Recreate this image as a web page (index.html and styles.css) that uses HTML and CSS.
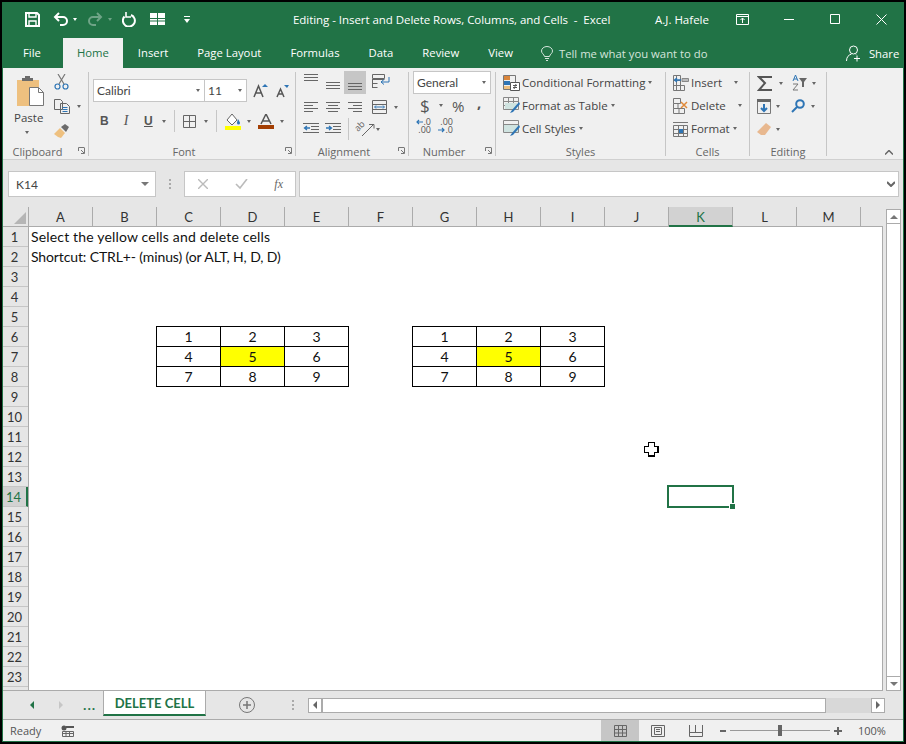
FILE: index.html
```html
<!DOCTYPE html>
<html>
<head>
<meta charset="UTF-8">
<title>Excel</title>
<link rel="stylesheet" href="styles.css">
</head>
<body>
<div class="window">

  <div class="titlebar">
    <div class="qat">
      <svg class="ml22" width="15" height="15" viewBox="0 0 15 15" fill="none" stroke="#fff" stroke-width="2"><path d="M1 1h11l2 2v11H1z"/><path d="M4 1v4h7V1M4 14V9h7v5" stroke-width="1.4"/></svg>
      <svg class="ml13" width="16" height="14" viewBox="0 0 16 14" fill="none" stroke="#fff" stroke-width="2"><path d="M6 1 2 5l4 4M2 5h8a4 4 0 0 1 0 8H7"/></svg>
      <i class="caret white ml4"></i>
      <svg class="ml10 dim" width="16" height="14" viewBox="0 0 16 14" fill="none" stroke="#fff" stroke-width="2"><path d="m10 1 4 4-4 4M14 5H6a4 4 0 0 0 0 8h3"/></svg>
      <i class="caret white ml5 dim"></i>
      <svg class="ml10" width="15" height="15" viewBox="0 0 15 15" fill="none" stroke="#fff" stroke-width="2"><path d="M9 3a6 6 0 1 1-6.500 1.500"/><path d="M4 0v5h5" stroke-width="1.600"/></svg>
      <svg class="ml13" width="15" height="12" viewBox="0 0 15 12" fill="#fff"><path d="M0 0h7v5H0zM8 0h7v5H8zM0 6h7v1.500H0zM8 6h7v1.500H8zM0 8.500h7V12H0zM8 8.500h7V12H8z"/></svg>
      <svg class="ml19" width="6" height="7" viewBox="0 0 6 7" fill="#fff"><path d="M0 0h6v1H0zM0 3h6L3 7z"/></svg>
    </div>
    <div class="doc-title">Editing - Insert and Delete Rows, Columns, and Cells&nbsp; -&nbsp; Excel</div>
    <div class="user">A.J. Hafele</div>
    <svg class="ml26" width="13" height="11" viewBox="0 0 13 11" fill="none" stroke="#fff"><path d="M.5.500h12v10H.500zM.5 2.500h12M6.500 9V4M4.500 6l2-2 2 2"/></svg>
    <svg class="ml35" width="10" height="1" viewBox="0 0 10 1" fill="#fff"><path d="M0 0h10v1H0z"/></svg>
    <svg class="ml36" width="10" height="10" viewBox="0 0 10 10" fill="none" stroke="#fff"><path d="M.5.500h9v9h-9z"/></svg>
    <svg class="ml36" width="11" height="11" viewBox="0 0 11 11" fill="none" stroke="#fff"><path d="m.5.500 10 10M10.500.500l-10 10"/></svg>
  </div>

  <div class="tabs">
    <a class="tab first">File</a>
    <a class="tab active">Home</a>
    <a class="tab">Insert</a>
    <a class="tab">Page Layout</a>
    <a class="tab">Formulas</a>
    <a class="tab">Data</a>
    <a class="tab">Review</a>
    <a class="tab">View</a>
    <svg class="ml13" width="12" height="15" viewBox="0 0 12 15" fill="none" stroke="#d5e5dc"><path d="M3.500 10.500C3 8 .5 7.500.5 5a5.500 4.500 0 0 1 11 0c0 2.500-2.500 3-3 5.500zM4 12.500h4M5 14.500h2"/></svg>
    <span class="tell">Tell me what you want to do</span>
    <svg class="share-icon" width="15" height="17" viewBox="0 0 15 17" fill="none" stroke="#fff"><circle cx="7.500" cy="5" r="4"/><path d="M.5 16c0-4 2-6 5-7M10 9.500 10 9M8 13.500h6M11 10.500v6"/></svg>
    <span class="share">Share</span>
  </div>

  <div class="ribbon">

    <section class="group g-clip">
      <div class="body clip-body">
        <div class="paste">
          <svg width="29" height="31" viewBox="0 0 29 31"><path d="M1 4h5V2h11v2h6v26H1z" fill="#eec07f"/><path d="M6 5V2h3V0h5v2h3v3z" fill="#6b6b6b"/><path d="M13.500 11.500h9l5 5v13h-14z" fill="#fff" stroke="#777"/><path d="M22.500 11.500v5h5" fill="none" stroke="#777"/></svg>
          <span>Paste</span>
          <i class="caret"></i>
        </div>
        <div class="clip-tools">
          <svg width="15" height="16" viewBox="0 0 15 16" fill="none" stroke="#777" stroke-width="1.200"><path d="m4 0 6 10M11 0 5 10"/><circle cx="3.500" cy="12.500" r="2.500" stroke="#2e75b5"/><circle cx="11.500" cy="12.500" r="2.500" stroke="#2e75b5"/></svg>
          <div class="copy-row">
            <svg width="16" height="15" viewBox="0 0 16 15" fill="none" stroke="#666"><path d="M.5.500h6l2 2v8h-8zM6.500 4.500h6l3 3v7h-9z" fill="#f0f0f0"/><path d="M8.500 8.500h5M8.500 10.500h5M8.500 12.500h5" stroke="#2e75b5"/></svg>
            <i class="caret ml7"></i>
          </div>
          <svg width="16" height="15" viewBox="0 0 16 15"><path d="M0 11 6 5l5 5-4 5-3-1z" fill="#eec07f"/><path d="m7 4 4-3 4 3-3 5z" fill="#6b6b6b"/></svg>
        </div>
      </div>
      <div class="label launch">Clipboard<svg class="launcher" width="7" height="7" viewBox="0 0 7 7" fill="none" stroke="#777"><path d="M.5 4V.500H6.500M6.500 1v5.500H3M3 3l3 3"/></svg></div>
    </section>

    <section class="group g-font">
      <div class="body col">
        <div class="row font-row1">
          <div class="combo font-name"><span>Calibri</span><i class="caret"></i></div>
          <div class="combo font-size"><span>11</span><i class="caret"></i></div>
          <svg class="ml6" width="15" height="15" viewBox="0 0 15 15" fill="none"><path d="m1 14 4.500-11L10 14M3 10h5" stroke="#555" stroke-width="1.500"/><path d="m9 4 3-3 3 3z" fill="#2e75b5"/></svg>
          <svg class="ml8" width="13" height="14" viewBox="0 0 13 14" fill="none"><path d="m1 13 3.500-8L8 13M2.500 10h4" stroke="#555" stroke-width="1.500"/><path d="m8 1 3 3 2-3z" fill="#2e75b5"/></svg>
        </div>
        <div class="row font-row2">
          <b class="fmt ml7">B</b>
          <em class="fmt italic">I</em>
          <span class="fmt under">U</span>
          <i class="caret ml10"></i>
          <i class="vsep ml8"></i>
          <svg class="ml8" width="13" height="13" viewBox="0 0 13 13" fill="none" stroke="#666"><path d="M.5.500h12v12H.5zM6.500.500v12M.5 6.500h12"/></svg>
          <i class="caret ml8"></i>
          <i class="vsep ml8"></i>
          <svg class="ml8" width="16" height="17" viewBox="0 0 16 17"><path d="M7 1 2 7l5 5 5-5z" fill="#fff" stroke="#666"/><path d="M13 6c1 2 2 3 2 4a1.500 1.500 0 0 1-3 0c0-1 .5-2 1-4z" fill="#2e75b5"/><path d="M0 13h16v4H0z" fill="#ff0"/></svg>
          <i class="caret ml6"></i>
          <svg class="ml7" width="16" height="15" viewBox="0 0 16 15" fill="none"><path d="m3 10 5-10 5 10M5 7h6" stroke="#555" stroke-width="1.500"/><path d="M0 11h16v4H0z" fill="#a33e03"/></svg>
          <i class="caret ml6"></i>
        </div>
      </div>
      <div class="label launch">Font<svg class="launcher" width="7" height="7" viewBox="0 0 7 7" fill="none" stroke="#777"><path d="M.5 4V.500H6.500M6.500 1v5.500H3M3 3l3 3"/></svg></div>
    </section>

    <section class="group g-align">
      <div class="body col">
        <div class="row align-row1">
          <svg class="ml8" width="14" height="8" viewBox="0 0 14 8" stroke="#666"><path d="M0 .5h14M0 3.500h14M0 6.500h14" /></svg>
          <svg class="ml8 down4" width="14" height="8" viewBox="0 0 14 8" stroke="#666"><path d="M0 .5h14M0 3.500h14M0 6.500h14" /></svg>
          <div class="align-on"><svg width="14" height="8" viewBox="0 0 14 8" stroke="#666"><path d="M0 .5h14M0 3.500h14M0 6.500h14" /></svg></div>
          <svg class="ml6" width="18" height="15" viewBox="0 0 18 15" fill="none" stroke="#666"><path d="M.5.500h12v4H.5zM.5 5.500h12M.5 9.500h5M.5 13.500h5M.5 5v9"/><path d="M17 3v5h-8M12 5.500 9 8l3 2.500" stroke="#2e75b5"/></svg>
        </div>
        <div class="row align-row2">
          <svg class="ml8" width="14" height="11" viewBox="0 0 14 11" stroke="#666"><path d="M0 .5h14M0 3.500h9M0 6.500h14M0 9.500h9"/></svg>
          <svg class="ml8" width="14" height="11" viewBox="0 0 14 11" stroke="#666"><path d="M0 .5h14M2 3.500h10M0 6.500h14M2 9.500h10"/></svg>
          <svg class="ml8" width="14" height="11" viewBox="0 0 14 11" stroke="#666"><path d="M0 .5h14M5 3.500h9M0 6.500h14M5 9.500h9"/></svg>
          <svg class="ml10" width="15" height="14" viewBox="0 0 15 14" fill="none" stroke="#666"><path d="M.5.500h14v13H.5zM.5 4.500h14M.5 9.500h14"/><path d="M3 7h9M4 5.500 2.500 7 4 8.500M11 5.500 12.500 7 11 8.500" stroke="#2e75b5"/></svg>
          <i class="caret ml7"></i>
        </div>
        <div class="row align-row3">
          <svg class="ml7" width="16" height="12" viewBox="0 0 16 12" fill="none"><path d="M0 .5h16M8 3.500h8M8 6.500h8M0 9.500h16" stroke="#666"/><path d="M7 5H2M4 3 1.500 5 4 7" stroke="#2e75b5" stroke-width="1.300"/></svg>
          <svg class="ml6" width="16" height="12" viewBox="0 0 16 12" fill="none"><path d="M0 .5h16M8 3.500h8M8 6.500h8M0 9.500h16" stroke="#666"/><path d="M1 5h5M4 3l2.500 2L4 7" stroke="#2e75b5" stroke-width="1.300"/></svg>
          <i class="vsep ml7"></i>
          <svg class="ml7 orient-icon" width="20" height="16" viewBox="0 0 20 16" fill="none" stroke="#666"><text class="orient" transform="translate(2 11) rotate(-45)">ab</text><path d="M6 15 17 4M13 3.500h5v4"/></svg>
          <i class="caret"></i>
        </div>
      </div>
      <div class="label launch">Alignment<svg class="launcher" width="7" height="7" viewBox="0 0 7 7" fill="none" stroke="#777"><path d="M.5 4V.500H6.500M6.500 1v5.500H3M3 3l3 3"/></svg></div>
    </section>

    <section class="group g-number">
      <div class="body col">
        <div class="combo num-format"><span>General</span><i class="caret"></i></div>
        <div class="row num-row2">
          <span class="num-sym dollar">$</span>
          <i class="caret ml10"></i>
          <span class="num-sym pct">%</span>
          <span class="num-sym comma">,</span>
        </div>
        <div class="row num-row3">
          <div class="dec">.0
.00<svg class="dec-arrow top" width="7" height="6" viewBox="0 0 7 6" fill="none" stroke="#2e75b5" stroke-width="1.200"><path d="M7 3H1M3 1 1 3l2 2"/></svg></div>
          <div class="dec ml7">.00
.0<svg class="dec-arrow bottom" width="7" height="6" viewBox="0 0 7 6" fill="none" stroke="#2e75b5" stroke-width="1.200"><path d="M0 3h6M4 1l2 2-2 2"/></svg></div>
        </div>
      </div>
      <div class="label launch">Number<svg class="launcher" width="7" height="7" viewBox="0 0 7 7" fill="none" stroke="#777"><path d="M.5 4V.500H6.500M6.500 1v5.500H3M3 3l3 3"/></svg></div>
    </section>

    <section class="group g-styles">
      <div class="body col">
        <div class="cmd">
          <svg width="17" height="16" viewBox="0 0 17 16" fill="none"><path d="M.5.500h12v14H.5z" stroke="#777"/><path d="M1 1h6v4H1z" fill="#d9853b"/><path d="M1 6h6v4H1z" fill="#2e75b5"/><path d="M1 11h6v3H1z" fill="#eec07f"/><path d="M7.500 7.500h9v8h-9z" fill="#fff" stroke="#555"/><path d="M10 10.500h4M10 12.500h4M13 9l-2 5" stroke="#555"/></svg>
          <span>Conditional Formatting</span><i class="caret"></i>
        </div>
        <div class="cmd">
          <svg width="17" height="17" viewBox="0 0 17 17" fill="none"><path d="M.5.500h15v12H.5zM.5 4.500h15M5.500.500v12M10.500.500v12M.5 8.500h15" stroke="#888"/><path d="M2 6h12v6H2z" fill="#cfe3e0"/><path d="m16 5-7 8-2 3 3-1 7-8z" fill="#2e75b5"/></svg>
          <span>Format as Table</span><i class="caret"></i>
        </div>
        <div class="cmd">
          <svg width="17" height="17" viewBox="0 0 17 17" fill="none"><path d="M.5.500h15v12H.5zM.5 4.500h15" stroke="#888"/><path d="M1 5h14v7H1z" fill="#cfe3e0"/><path d="m16 5-7 8-2 3 3-1 7-8z" fill="#2e75b5"/></svg>
          <span>Cell Styles</span><i class="caret"></i>
        </div>
      </div>
      <div class="label">Styles</div>
    </section>

    <section class="group g-cells">
      <div class="body col">
        <div class="cmd">
          <svg width="16" height="16" viewBox="0 0 16 16" fill="none"><path d="M.5.500h7v15h-7zM.5 5.500h7M.5 10.500h7M3.500.500v15M7.500 10.500h4v5h-4z" stroke="#777"/><path d="M9 3.500h6.500v3H9z" fill="#bbb" stroke="#888"/><path d="M8 5H1.500M4 3 1.500 5 4 7" stroke="#2e75b5" stroke-width="1.300"/></svg>
          <span>Insert</span><i class="caret ml12"></i>
        </div>
        <div class="cmd">
          <svg width="16" height="16" viewBox="0 0 16 16" fill="none"><path d="M.5.500h7v5h-7zM.5 10.500h11v5H.5zM6 10.500v5M.5 5.500v5M5 5.500v5" stroke="#777"/><path d="m8 4 6 6M14 4l-6 6" stroke="#e08a3a" stroke-width="1.500"/></svg>
          <span>Delete</span><i class="caret ml12"></i>
        </div>
        <div class="cmd">
          <svg width="16" height="16" viewBox="0 0 16 16" fill="none"><path d="M.5 4.500h14v11H.5zM.5 8.500h14M.5 12.500h14M5.500 4.500v11M10.500 4.500v11M0 1.500h15" stroke="#777"/><path d="M6 8h4v4H6z" fill="#2e75b5"/></svg>
          <span>Format</span><i class="caret ml3"></i>
        </div>
      </div>
      <div class="label">Cells</div>
    </section>

    <section class="group g-edit">
      <div class="body col">
        <div class="row edit-row1">
          <svg width="15" height="15" viewBox="0 0 15 15" fill="none" stroke="#555" stroke-width="2"><path d="M15 1H2l6 6-6 7h13"/></svg>
          <i class="caret ml7"></i>
          <svg class="ml9" width="18" height="16" viewBox="0 0 18 16" fill="none"><path d="m1 6 2.500-6L6 6M2 4h3" stroke="#2e75b5"/><path d="M1 9h5L1 15h5" stroke="#777"/><path d="M7 3h8l-3 4v5h-2V7z" fill="#666"/></svg>
          <i class="caret ml2"></i>
        </div>
        <div class="row edit-row2">
          <svg width="14" height="15" viewBox="0 0 14 15" fill="none"><path d="M.5.500h13v14H.5z" stroke="#777"/><path d="M0 0h14v3H0z" fill="#666"/><path d="M7 5v7M4 9l3 3 3-3" stroke="#2e75b5" stroke-width="2"/></svg>
          <i class="caret ml5"></i>
          <svg class="ml11" width="14" height="14" viewBox="0 0 14 14" fill="none" stroke="#2e75b5" stroke-width="2"><circle cx="9" cy="5" r="3.800"/><path d="M6 8 1 13"/></svg>
          <i class="caret ml6"></i>
        </div>
        <div class="row edit-row3">
          <svg width="14" height="13" viewBox="0 0 14 13"><path d="M9 0l5 4-6 8H4L0 9z" fill="#e8b88f"/></svg>
          <i class="caret ml5"></i>
        </div>
      </div>
      <div class="label">Editing</div>
    </section>

    <div class="collapse"><svg width="8" height="5" viewBox="0 0 8 5" fill="none" stroke="#666" stroke-width="1.500"><path d="m0 4.500 4-4 4 4"/></svg></div>
  </div>

  <div class="formula">
    <div class="namebox"><span>K14</span><i class="caret wide"></i></div>
    <span class="grip"></span>
    <div class="fx-box">
      <svg width="10" height="10" viewBox="0 0 10 10" fill="none" stroke="#bbb" stroke-width="1.400"><path d="m0 0 10 10M10 0 0 10"/></svg>
      <svg width="13" height="10" viewBox="0 0 13 10" fill="none" stroke="#bbb" stroke-width="1.600"><path d="m1 5 4 4 7-9"/></svg>
      <span class="fx">fx</span>
    </div>
    <div class="formula-input"><svg width="8" height="6" viewBox="0 0 8 6" fill="none" stroke="#666" stroke-width="2"><path d="m0 1 4 4 4-4"/></svg></div>
  </div>

  <div class="sheet">
    <div class="sheet-main">
      <div class="col-heads">
        <div class="corner"><svg width="12" height="12" viewBox="0 0 12 12" fill="#b5b5b5"><path d="M12 0v12H0z"/></svg></div>
        <div class="ch">A</div><div class="ch">B</div><div class="ch">C</div><div class="ch">D</div><div class="ch">E</div><div class="ch">F</div><div class="ch">G</div><div class="ch">H</div><div class="ch">I</div><div class="ch">J</div><div class="ch on">K</div><div class="ch">L</div><div class="ch">M</div>
      </div>
      <div class="grid-wrap">
        <div class="row-heads">
          <div class="rh">1</div><div class="rh">2</div><div class="rh">3</div><div class="rh">4</div><div class="rh">5</div><div class="rh">6</div><div class="rh">7</div><div class="rh">8</div><div class="rh">9</div><div class="rh">10</div><div class="rh">11</div><div class="rh">12</div><div class="rh">13</div><div class="rh on">14</div><div class="rh">15</div><div class="rh">16</div><div class="rh">17</div><div class="rh">18</div><div class="rh">19</div><div class="rh">20</div><div class="rh">21</div><div class="rh">22</div><div class="rh">23</div>
        </div>
        <div class="cells">
          <div class="line first">Select the yellow cells and delete cells</div>
          <div class="line second">Shortcut: CTRL+- (minus) (or ALT, H, D, D)</div>
          <div class="tables">
            <table>
              <tr><td>1</td><td>2</td><td>3</td></tr>
              <tr><td>4</td><td class="yellow">5</td><td>6</td></tr>
              <tr><td>7</td><td>8</td><td>9</td></tr>
            </table>
            <table>
              <tr><td>1</td><td>2</td><td>3</td></tr>
              <tr><td>4</td><td class="yellow">5</td><td>6</td></tr>
              <tr><td>7</td><td>8</td><td>9</td></tr>
            </table>
          </div>
          <svg class="cursor" width="15" height="15" viewBox="0 0 15 15"><path d="M4 0h7v4h4v7h-4v4H4v-4H0V4h4z" fill="#000"/><path d="M5 1h5v4h3v5h-3v3H5v-3H1V5h4z" fill="#fff"/></svg>
          <div class="selection"><i></i></div>
        </div>
      </div>
    </div>
    <div class="vscroll">
      <div class="sb-btn"><i class="tri-up"></i></div>
      <div class="vthumb"></div>
      <div class="sb-btn"><i class="tri-down"></i></div>
    </div>
  </div>

  <div class="sheet-tabs">
    <i class="tri-left green ml27"></i>
    <i class="tri-right pale ml25"></i>
    <span class="dots">...</span>
    <div class="sheet-tab">DELETE CELL</div>
    <svg class="ml33" width="16" height="16" viewBox="0 0 16 16" fill="none" stroke="#777"><circle cx="8" cy="8" r="7.500"/><path d="M8 4v8M4 8h8" stroke-width="1.500"/></svg>
    <span class="grip tab-grip"></span>
    <div class="hscroll">
      <div class="sb-btn h"><i class="tri-left"></i></div>
      <div class="hthumb"></div>
      <div class="htrack"></div>
      <div class="sb-btn h"><i class="tri-right"></i></div>
    </div>
  </div>

  <div class="status">
    <span class="ready">Ready</span>
    <svg class="ml13" width="13" height="12" viewBox="0 0 13 12" fill="none"><circle cx="3" cy="3" r="2.500" fill="#555"/><path d="M5 1h8v2H5z" fill="#555"/><path d="M1.500 6.500h11v5h-11zM1.500 8.500h11M5 6.500v5M8.500 6.500v5" stroke="#666"/></svg>
    <div class="views">
      <div class="view on"><svg width="13" height="12" viewBox="0 0 13 12" fill="none" stroke="#666"><path d="M.5.500h12v11H.5zM.5 4.500h12M.5 8h12M4.500.500v11M8.500.500v11"/></svg></div>
      <div class="view"><svg width="14" height="12" viewBox="0 0 14 12" fill="none" stroke="#666"><path d="M.5.500h13v11H.5zM3.500 2.500h7v7h-7zM5 4.500h4M5 6.500h4"/></svg></div>
      <div class="view"><svg width="14" height="12" viewBox="0 0 14 12" fill="none" stroke="#666"><path d="M.5 0v11.500h13V0M.5 7.500h13M6.500 0v7.500"/></svg></div>
    </div>
    <svg class="ml5" width="6" height="2" viewBox="0 0 6 2" fill="#666"><path d="M0 0h6v2H0z"/></svg>
    <div class="zoom-track"><i></i></div>
    <svg class="ml4" width="8" height="8" viewBox="0 0 8 8" fill="#666"><path d="M3 0h2v3h3v2H5v3H3V5H0V3h3z"/></svg>
    <span class="zoom-val">100%</span>
  </div>

</div>
</body>
</html>
```

FILE: styles.css
```css
* { box-sizing: border-box; }
html, body { margin: 0; height: 100%; }
body { background: #000; font-family: "Open Sans", "Noto Sans", sans-serif; overflow: hidden; }

.window { width: 902px; height: 740px; margin: 2px; background: #e6e6e6; border: 1px solid #217346; border-top: 0; display: flex; flex-direction: column; }

.ml2 { margin-left: 2px; } .ml3 { margin-left: 3px; } .ml4 { margin-left: 4px; } .ml5 { margin-left: 5px; }
.ml6 { margin-left: 6px; } .ml7 { margin-left: 7px; } .ml8 { margin-left: 8px; } .ml9 { margin-left: 9px; }
.ml10 { margin-left: 10px; } .ml11 { margin-left: 11px; } .ml12 { margin-left: 12px; } .ml13 { margin-left: 13px; }
.ml19 { margin-left: 19px; } .ml22 { margin-left: 22px; } .ml25 { margin-left: 25px; }
.ml26 { margin-left: 26px; } .ml27 { margin-left: 27px; } .ml33 { margin-left: 33px; } .ml35 { margin-left: 35px; } .ml36 { margin-left: 36px; }
.dim { opacity: .35; }
.down4 { margin-top: 8px; }

.caret { display: block; width: 0; height: 0; flex: none; border: 2.500px solid transparent; border-top: 3px solid #666; border-bottom: 0; }
.caret.white { border-top-color: #fff; }
.caret.wide { border-width: 4px 4px 0; border-top-color: #777; }
.vsep { display: block; width: 1px; height: 22px; background: #c6c6c6; flex: none; }

/* title bar */
.titlebar { height: 36px; padding-bottom: 2px; background: #217346; color: #fff; display: flex; align-items: center; font-size: 11.500px; flex: none; }
.qat { display: flex; align-items: center; width: 290px; }
.doc-title { width: 362px; white-space: nowrap; letter-spacing: -.05px; }
.user { width: 55px; white-space: nowrap; }

/* tabs */
.tabs { height: 30px; background: #217346; color: #fff; display: flex; align-items: center; font-size: 11.300px; padding-left: 6px; flex: none; }
.tab { height: 30px; line-height: 29px; padding: 0 14px; margin-right: 1px; white-space: nowrap; }
.tab.first { margin-right: 8px; }
.tab.active { background: #f0f0f0; color: #217346; }
.tell { margin-left: 6px; color: #d5e5dc; white-space: nowrap; width: 287px; line-height: 29px; }
.share-icon { flex: none; }
.share { margin-left: 8px; line-height: 29px; }

/* ribbon */
.ribbon { height: 92px; background: #f0f0f0; border-bottom: 1px solid #d0d0d0; display: flex; flex: none; font-size: 11.500px; color: #444; padding-top: 4px; }
.group { display: flex; flex-direction: column; border-right: 1px solid #c6c6c6; height: 84px; flex: none; }
.body { height: 75px; margin-top: -1px; }
.col { display: flex; flex-direction: column; }
.row { display: flex; align-items: center; }
.label { position: relative; height: 10px; line-height: 12px; font-size: 11px; color: #666; text-align: center; }
.label.launch { padding-right: 16px; }
.launcher { position: absolute; right: 3px; top: 1px; }

.g-clip { width: 86px; }
.clip-body { display: flex; padding-left: 12px; }
.paste { width: 37px; display: flex; flex-direction: column; align-items: flex-start; padding-left: 1px; padding-top: 5px; }
.paste span { margin: 3px 0 0 -2px; }
.paste .caret { margin: 6px 0 0 9px; }
.clip-tools { display: flex; flex-direction: column; gap: 9px; padding: 3px 0 0 2px; }
.copy-row { display: flex; align-items: center; }

.g-font { width: 207px; }
.font-row1 { margin-top: 8px; padding-left: 4px; }
.combo { height: 23px; background: #fff; border: 1px solid #c6c6c6; display: flex; align-items: center; justify-content: space-between; padding: 0 4px 0 3px; flex: none; }
.font-name { width: 112px; font-family: Lato, sans-serif; font-size: 12px; }
.font-size { width: 43px; margin-left: -1px; font-family: Lato, sans-serif; font-size: 12px; }
.font-row2 { margin-top: 7px; height: 24px; padding-left: 4px; }
.fmt { width: 8px; font-family: "Liberation Sans", sans-serif; font-size: 12px; color: #555; text-align: center; }
.italic { margin-left: 14px; font-style: italic; font-family: "Liberation Serif", serif; font-size: 14px; }
.under { margin-left: 14px; text-decoration: underline; font-weight: bold; }

.g-align { width: 113px; }
.align-row1 { height: 23px; align-items: flex-start; padding-top: 3px; }
.align-on { width: 22px; height: 23px; margin: -3px 0 0 4px; background: #c6c6c6; display: flex; align-items: flex-end; justify-content: center; padding-bottom: 3px; }
.align-row2 { height: 14px; margin-top: 6px; }
.align-row3 { height: 22px; margin-top: 4px; }
.orient-icon { overflow: visible; }
.orient { font-family: "Open Sans", sans-serif; font-size: 9px; fill: #666; stroke: none; }

.g-number { width: 87px; }
.g-number .body { padding-left: 4px; }
.num-format { width: 78px; font-family: Lato, sans-serif; font-size: 12px; }
.num-row2 { height: 23px; color: #555; }
.num-sym.dollar { margin-left: 7px; width: 9px; font-size: 17px; line-height: 20px; text-align: center; }
.num-sym.pct { margin-left: 9px; width: 13px; font-size: 15px; line-height: 20px; }
.num-sym.comma { margin-left: 12px; font-size: 15px; font-weight: bold; line-height: 16px; margin-top: -8px; }
.num-row3 { margin-top: 1px; padding-left: 3px; }
.dec { position: relative; width: 15px; height: 16px; white-space: pre-line; text-align: right; font-size: 9px; line-height: 8px; color: #555; }
.dec-arrow { position: absolute; left: 0; }
.dec-arrow.top { top: 1px; }
.dec-arrow.bottom { bottom: 1px; }

.g-styles { width: 170px; }
.g-cells { width: 84px; }
.g-edit { width: 77px; }
.g-styles .body, .g-cells .body, .g-edit .body { padding-left: 7px; }
.cmd { height: 23px; display: flex; align-items: center; white-space: nowrap; }
.cmd svg { margin-right: 2px; flex: none; }
.cmd .caret { margin-left: 3px; }
.cmd .caret.ml12 { margin-left: 12px; }

.edit-row1 { height: 24px; }
.edit-row2 { height: 22px; }
.edit-row3 { height: 24px; }
.collapse { display: flex; margin: 78px 0 0 58px; }

/* formula bar */
.formula { height: 47px; padding: 11px 4px 10px 5px; display: flex; align-items: stretch; flex: none; }
.namebox { width: 148px; background: #fff; border: 1px solid #c6c6c6; display: flex; align-items: center; justify-content: space-between; padding: 0 6px 0 7px; font-family: Lato, sans-serif; font-size: 12px; color: #444; }
.grip { width: 3px; height: 10px; margin: 8px 13px 0 13px; border-left: 2px dotted #aaa; flex: none; }
.fx-box { width: 112px; margin-left: -1px; background: #fff; border: 1px solid #c6c6c6; display: flex; align-items: center; justify-content: space-between; padding: 0 12px 0 13px; }
.fx { font-family: "Liberation Serif", serif; font-style: italic; font-size: 12px; color: #666; }
.formula-input { width: 600px; margin-left: 3px; background: #fff; border: 1px solid #c6c6c6; display: flex; align-items: center; justify-content: flex-end; padding-right: 3px; }

/* sheet */
.sheet { height: 484px; display: flex; flex: none; }
.sheet-main { width: 880px; border-bottom: 1px solid #ababab; flex: none; }
.col-heads { height: 20px; display: flex; font-family: Lato, sans-serif; font-size: 13px; color: #333; border-bottom: 1px solid #ababab; }
.corner { width: 26px; display: flex; align-items: flex-end; justify-content: flex-end; padding: 0 2px 2px 0; border-right: 1px solid #ababab; }
.ch { width: 64px; text-align: center; line-height: 20px; border-right: 1px solid #ababab; flex: none; }
.ch.on { height: 20px; background: #d2d2d2; color: #217346; border-bottom: 2px solid #217346; }
.grid-wrap { display: flex; height: 463px; }
.row-heads { width: 26px; flex: none; border-right: 1px solid #ababab; overflow: hidden; font-family: Lato, sans-serif; font-size: 13px; color: #333; }
.rh { height: 20px; line-height: 20px; text-align: center; border-bottom: 1px solid #c6c6c6; padding-right: 2px; }
.rh.on { background: #d2d2d2; color: #217346; border-right: 2px solid #217346; }
.cells { flex: 1; background: #fff; border-right: 1px solid #ababab; position: relative; font-family: Lato, sans-serif; font-size: 14px; color: #111; overflow: hidden; }
.line { height: 20px; line-height: 20px; padding-left: 2px; white-space: nowrap; }
.line.first { letter-spacing: .17px; }
.line.second { letter-spacing: -.12px; }
.tables { display: flex; gap: 63px; padding: 59px 0 0 127px; }
table { border-collapse: collapse; table-layout: fixed; width: 193px; }
td { width: 64px; height: 20px; padding: 0; border: 1px solid #000; text-align: center; line-height: 18px; }
td.yellow { background: #ff0; }
.cursor { position: absolute; left: 615px; top: 215px; }
.selection { position: absolute; left: 638px; top: 258px; width: 67px; height: 23px; border: 2px solid #217346; }
.selection i { position: absolute; right: -3px; bottom: -3px; width: 6px; height: 6px; background: #217346; border: 1px solid #fff; border-width: 1px 0 0 1px; }

.vscroll { width: 15px; margin-left: 3px; display: flex; flex-direction: column; padding: 2px 0 0 0; }
.sb-btn { width: 15px; height: 15px; background: #fff; border: 1px solid #ababab; display: flex; align-items: center; justify-content: center; flex: none; }
.sb-btn.h { width: 14px; height: 15px; }
.vthumb { flex: 1; background: #fff; border: 1px solid #ababab; border-width: 0 1px; width: 15px; }
.tri-up { width: 0; height: 0; border: 4px solid transparent; border-bottom: 4px solid #777; border-top: 0; }
.tri-down { width: 0; height: 0; border: 4px solid transparent; border-top: 4px solid #777; border-bottom: 0; }
.tri-left { display: block; width: 0; height: 0; border: 4px solid transparent; border-right: 4px solid #666; border-left: 0; }
.tri-right { display: block; width: 0; height: 0; border: 4px solid transparent; border-left: 4px solid #666; border-right: 0; }
.tri-left.green { border-right-color: #217346; }
.tri-right.pale { border-left-color: #c6c6c6; }

/* sheet tabs */
.sheet-tabs { height: 28px; display: flex; align-items: center; flex: none; }
.dots { margin-left: 20px; font-weight: bold; color: #217346; font-size: 12px; letter-spacing: 1px; width: 20px; }
.sheet-tab { width: 103px; height: 25px; align-self: flex-start; background: #fff; border: 1px solid #ababab; border-top: 0; border-bottom: 2px solid #217346; color: #217346; font-family: Lato, sans-serif; font-weight: bold; font-size: 13px; text-align: center; line-height: 24px; }
.tab-grip { margin: 0 13px 0 37px; }
.hscroll { display: flex; align-items: center; width: 577px; height: 15px; }
.hthumb { width: 504px; height: 15px; background: #fff; border: 1px solid #ababab; flex: none; }
.htrack { flex: 1; height: 15px; background: #d8d8d8; }

/* status bar */
.status { height: 22px; background: #f0f0f0; border-top: 1px solid #ababab; display: flex; align-items: center; font-size: 11px; color: #555; flex: none; }
.ready { margin-left: 7px; width: 38px; line-height: 19px; }
.views { display: flex; margin-left: 527px; height: 100%; }
.view { width: 38px; display: flex; align-items: center; justify-content: center; }
.view.on { background: #c6c6c6; }
.zoom-track { width: 100px; height: 1px; background: #999; margin-left: 4px; position: relative; }
.zoom-track i { position: absolute; left: 48px; top: -5px; width: 4px; height: 11px; background: #666; }
.zoom-val { margin-left: 16px; line-height: 19px; }
```
